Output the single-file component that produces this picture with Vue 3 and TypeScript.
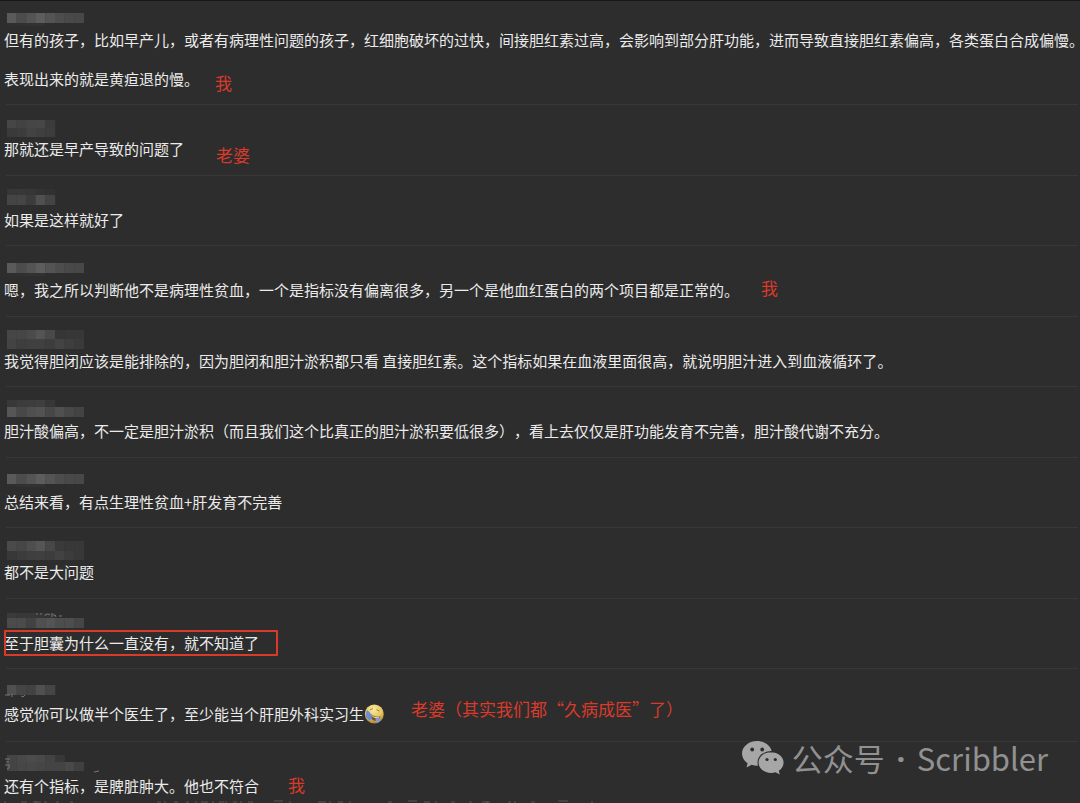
<script setup lang="ts">
interface Strip {
  y: number
  h: number
  tones: string[]
}
interface Message {
  lines: string[]
  name: Strip[]
  marks?: string
  note?: { text: string; at: string }
  boxed?: boolean
  emoji?: boolean
}

const longName = (y: number): Strip[] => [
  { y: y + 9, h: 4, tones: ['2f', '31', '32', '32'] },
  { y, h: 10, tones: ['5a', '4c', '54', '5d', '54', '4d', '49', '48'] },
]

const messages: Message[] = [
  {
    lines: [
      '但有的孩子，比如早产儿，或者有病理性问题的孩子，红细胞破坏的过快，间接胆红素过高，会影响到部分肝功能，进而导致直接胆红素偏高，各类蛋白合成偏慢。',
      '表现出来的就是黄疸退的慢。',
    ],
    name: longName(17),
    note: { text: '我', at: 'n1' },
  },
  {
    lines: ['那就还是早产导致的问题了'],
    name: [
      { y: 15, h: 8, tones: ['46', '42', '46', '47', '3b'] },
      { y: 23, h: 9, tones: ['3a', '3c', '43', '40', '3d'] },
    ],
    note: { text: '老婆', at: 'n2' },
  },
  {
    lines: ['如果是这样就好了'],
    name: [
      { y: 13, h: 7, tones: ['37', '38', '36', '33', '31'] },
      { y: 19, h: 10, tones: ['45', '45', '3c', '50', '44'] },
    ],
  },
  {
    lines: ['嗯，我之所以判断他不是病理性贫血，一个是指标没有偏离很多，另一个是他血红蛋白的两个项目都是正常的。'],
    name: longName(17),
    note: { text: '我', at: 'n3' },
  },
  {
    lines: ['我觉得胆闭应该是能排除的，因为胆闭和胆汁淤积都只看 直接胆红素。这个指标如果在血液里面很高，就说明胆汁进入到血液循环了。'],
    name: [
      { y: 13, h: 9, tones: ['46', '46', '4b', '54', '49', '36', '37', '37'] },
      { y: 22, h: 10, tones: ['43', '3e', '40', '40', '3d', '43', '3e', '3a'] },
    ],
  },
  {
    lines: ['胆汁酸偏高，不一定是胆汁淤积（而且我们这个比真正的胆汁淤积要低很多），看上去仅仅是肝功能发育不完善，胆汁酸代谢不充分。'],
    name: [
      { y: 13, h: 7, tones: ['38', '3c', '3d', '3f', '37'] },
      { y: 20, h: 10, tones: ['56', '48', '4f', '52', '47', '50', '48', '43'] },
    ],
  },
  {
    lines: ['总结来看，有点生理性贫血+肝发育不完善'],
    name: longName(16),
  },
  {
    lines: ['都不是大问题'],
    name: [
      { y: 13, h: 10, tones: ['4a', '46', '4e', '55', '47', '3a', '38', '38'] },
      { y: 23, h: 9, tones: ['38', '3c', '3f', '40', '3d', '42', '3c', '38'] },
    ],
  },
  {
    lines: ['至于胆囊为什么一直没有，就不知道了'],
    name: [
      { y: 14, h: 5, tones: ['3a', '38', '38', '35', '33'] },
      { y: 19, h: 10, tones: ['4b', '4b', '42', '50', '54', '4d', '4d', '46'] },
    ],
    marks: 'M36 15h2M40 15h2M45 17q0-2 3-2l2 1M52 14v4M53 16q3-1 3 2M59 17h3',
    boxed: true,
  },
  {
    lines: ['感觉你可以做半个医生了，至少能当个肝胆外科实习生'],
    name: [{ y: 16, h: 10, tones: ['50', '45', '42', '50', '45'] }],
    marks: 'M5 26h5M12 25v3M21 27l2 1 2-2',
    note: { text: '老婆（其实我们都“久病成医”了）', at: 'n4' },
    emoji: true,
  },
  {
    lines: ['还有个指标，是脾脏肿大。他也不符合'],
    name: [
      { y: 13, h: 8, tones: ['44', '48', '4c', '49', '43', '38'] },
      { y: 20, h: 9, tones: ['44', '47', '48', '46', '44', '44', '49', '40'] },
    ],
    marks: 'M5 17h5M6 20h3M5 23h5M9 23q1 4-2 4M94 30l5-1',
    note: { text: '我', at: 'n5' },
  },
]

const clipped =
  'M5 1v2M21 2h6M36 1v2M33 2h8M44 2h3M56 2h3M70 2h3M157 2h4M165 1v2M174 2h4M186 2h3M196 1v2M201 2h7M213 1v2M219 2h5M226 1v2M233 2h4M241 1v2M248 2h5M274 1h9M290 1v2M318 2h8M330 1v2M338 2h5M350 1v2M388 2h4M408 1h9M424 2h6M436 1v2M451 2h4M469 2h3M482 2h8M487 1v2M508 2h3M515 1v2M531 2h4M558 1h10M592 1v2'
</script>

<template>
  <main class="page">
    <ul class="chat">
      <li v-for="(m, i) in messages" :key="i" class="row">
        <svg class="name" viewBox="0 0 100 33" aria-hidden="true">
          <template v-for="(s, j) in m.name" :key="j">
            <rect
              v-for="(t, k) in s.tones"
              :key="k"
              :x="7 + k * 9.6"
              :y="s.y"
              width="9.8"
              :height="s.h"
              :fill="'#' + t + t + t"
            />
          </template>
          <path v-if="m.marks" :d="m.marks" fill="none" stroke="#777" />
        </svg>
        <div class="body">
          <p v-for="(line, j) in m.lines" :key="j" class="line" :class="{ boxed: m.boxed, tall: m.emoji }">
            <span>{{ line.slice(0, -1) }}<span class="last">{{ line.slice(-1) }}</span></span>
            <svg v-if="m.emoji" class="emoji" viewBox="0 0 20 20" role="img" aria-label="笑哭">
              <defs>
                <radialGradient id="face" cx="45%" cy="25%" r="75%">
                  <stop offset="0" stop-color="#fbeaa0" />
                  <stop offset=".65" stop-color="#e4c35c" />
                  <stop offset="1" stop-color="#ad8130" />
                </radialGradient>
              </defs>
              <circle cx="10.3" cy="10" r="9.5" fill="url(#face)" />
              <path d="M6 6l3-1.500M12.500 5.500l3 1.500" fill="none" stroke="#a57f38" />
              <path d="M5 8.500q4 5 11.500 4-1.500 4.500-5.500 4.500-5-1-6-8.500z" fill="#76542c" />
              <path d="M6.500 10.500q4 3.500 9 2.500l-1 1.500q-4.500.5-8-4z" fill="#f3e6bd" />
              <path d="M3.500 6q2.500 2 4 5.500 1.200 4-1.500 5-2-.5-4-3.500-1-4 1.500-7z" fill="#6a8fd0" />
              <path d="M11.500 15q3-2.500 5.500.5-1.500 2.500-4 3.500-2-1.500-1.500-4z" fill="#7d9dd0" />
            </svg>
          </p>
          <span v-if="m.note" class="note" :class="m.note.at">{{ m.note.text }}</span>
        </div>
      </li>
    </ul>
    <svg class="clipped" viewBox="0 0 620 3" aria-hidden="true">
      <path :d="clipped" fill="none" stroke="#585858" />
    </svg>
    <div class="brand">
      <svg class="wechat" viewBox="0 0 42 34" aria-hidden="true">
        <path d="M15 0C6.800 0 0 5.500 0 12.500c0 4 2.100 7.300 5.500 9.700L4.600 26.500l5-2.700c1.800.6 3.500.9 5.400.9 8.200 0 15-5.300 15-12.200S23.200 0 15 0z" fill="#a6a6a6" />
        <ellipse cx="29" cy="21.500" rx="13.500" ry="11.500" fill="#2c2c2c" />
        <path d="M29 11.200c-7 0-12.500 4.600-12.500 10.300S22 31.900 29 31.900c1.600 0 3.100-.3 4.500-.7l4.300 2.300-1-3.700c2.900-1.900 4.800-4.800 4.800-8.300 0-5.700-5.600-10.300-12.600-10.300z" fill="#a6a6a6" />
        <g fill="#2c2c2c">
          <circle cx="10.200" cy="8.500" r="1.900" />
          <circle cx="20.200" cy="8.500" r="1.900" />
          <circle cx="25" cy="18.500" r="1.600" />
          <circle cx="33.300" cy="18.500" r="1.600" />
        </g>
      </svg>
      <span>公众号</span>
      <span class="dot">·</span>
      <span>Scribbler</span>
    </div>
  </main>
</template>

<style>
body {
  margin: 0;
  background: #2d2d2d;
}
</style>

<style scoped>
.page {
  position: relative;
  overflow: hidden;
  box-sizing: border-box;
  border-top: 1px solid #171717;
  background: #2d2d2d;
  color: #ebebeb;
  font-family: "Noto Sans CJK SC", "Noto Sans", sans-serif;
  font-size: 15px;
  text-spacing-trim: space-all;
}
.chat {
  margin: 0;
  padding: 0;
  list-style: none;
}
.row {
  display: flex;
  flex-direction: column;
}
.row::after {
  content: "";
  height: 1px;
  margin: 14px 2px 0 6px;
  background: #373737;
}
.row:nth-child(even)::after {
  margin-top: 15px;
}
.row:last-child::after {
  display: none;
}
.name {
  display: block;
  width: 100px;
  height: 33px;
}
.row:first-child .name {
  margin-top: -5px;
}
.body {
  position: relative;
  display: flex;
  flex-direction: column;
  align-items: flex-start;
  gap: 17px;
  padding-left: 4px;
}
.line {
  position: relative;
  display: flex;
  align-items: center;
  height: 22px;
  margin: 0;
  line-height: 22px;
  white-space: nowrap;
}
/* A closing full stop takes its half-width form at the end of a line. */
.last {
  font-feature-settings: "halt";
}
.tall {
  height: 24px;
}
.emoji {
  width: 20px;
  height: 20px;
}
.boxed::after {
  content: "";
  position: absolute;
  inset: -2px -19px -2px 0;
  border: 2px solid #d93b2b;
  border-radius: 1px;
}
.note {
  position: absolute;
  color: #d93a2b;
  font-size: 17px;
  line-height: 24px;
  white-space: nowrap;
}
.n1 {
  left: 215px;
  bottom: -5px;
}
.n2 {
  left: 216px;
  top: 5px;
}
.n3 {
  left: 761px;
  top: -3px;
}
.n4 {
  left: 411px;
  top: -5px;
}
.n5 {
  left: 288px;
  top: -2px;
}
.clipped {
  display: block;
  width: 620px;
  height: 3px;
  margin-top: 3px;
}
.brand {
  position: absolute;
  right: 32px;
  bottom: 25px;
  display: flex;
  align-items: center;
  color: #919191;
  font-size: 31px;
  line-height: 40px;
}
.wechat {
  width: 42px;
  height: 34px;
  margin-right: 8px;
}
.dot {
  width: 32px;
  font-family: "Noto Sans", sans-serif;
  font-weight: 700;
  text-align: center;
}
</style>
